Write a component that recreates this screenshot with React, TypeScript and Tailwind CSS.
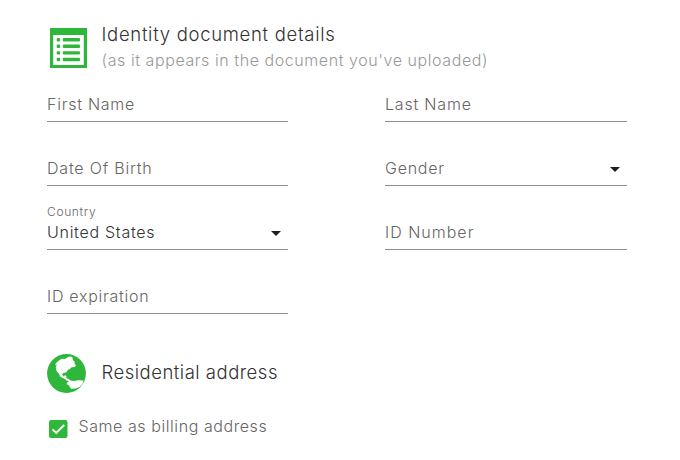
import type { ReactNode } from "react";

function Caret() {
  return (
    <svg width="10" height="5" viewBox="0 0 10 5" className="mr-[7px] mb-[13px] shrink-0">
      <path d="M0 0h10L5 5z" fill="#1f1f1f" />
    </svg>
  );
}

interface FieldProps {
  children: string;
  tracking: string;
  label?: string;
  select?: boolean;
}

function Field({ children, tracking, label, select }: FieldProps) {
  return (
    <div className="flex h-16 flex-col justify-end border-b border-[#8c8c8c]">
      {label && <span className="h-[15px] text-[12px] leading-4 font-light tracking-[0.65px] text-[#666]">{label}</span>}
      <div className="flex items-end justify-between">
        <span
          className={`h-[30px] text-[16px] leading-[26px] whitespace-nowrap ${label ? "text-[#333]" : "text-[#666]"} ${tracking}`}
        >
          {children}
        </span>
        {select && <Caret />}
      </div>
    </div>
  );
}

function ListIcon() {
  return (
    <svg width="37" height="40" viewBox="0 0 37 40" className="block">
      <path fill="#2fb73b" d="M0 0h37v40H0z" />
      <path fill="#fff" d="M3.200 7h30.600v30H3.200z" />
      <g fill="#2fb73b">
        <rect x="6.700" y="10" width="3.400" height="3.400" rx="1" />
        <rect x="6.700" y="16.600" width="3.400" height="3.400" rx="1" />
        <rect x="6.700" y="23.200" width="3.400" height="3.400" rx="1" />
        <rect x="6.700" y="29.800" width="3.400" height="3.400" rx="1" />
        <rect x="12.800" y="10" width="17.200" height="3.400" rx="1" />
        <rect x="12.800" y="16.600" width="17.200" height="3.400" rx="1" />
        <rect x="12.800" y="23.200" width="17.200" height="3.400" rx="1" />
        <rect x="12.800" y="29.800" width="17.200" height="3.400" rx="1" />
      </g>
    </svg>
  );
}

function GlobeIcon() {
  return (
    <svg width="39" height="39" viewBox="0 0 39 39" className="block">
      <circle cx="19.500" cy="19.500" r="19.400" fill="#2fb73b" />
      <path
        fill="#fff"
        d="M9 9l3-2.500 2.500-1.800 3.500.3 3-2 3-.5 1.500 1 .3 2.500 1.700 1.500.3 2.500 1.200 1.500-1.500 1.500-3 .3-1.500 1.700-2 .8-1.500 2.500-3 .7-1.500 1.500 1.500 1.800 1.700-1 1.300.7-.3 2 2.300 1 2 1.500-.5 1-3-.7-2.500-2-4-1.800-1.500-3-2.500-3-.8-4 1.300-2.500-2 .5z"
      />
      <path fill="#fff" d="M20.500 28.200l2.500-1.700 4 .5 4-.8 5.500.3-1 3.500-3 3-3.500 1.500-5 .3-2-3.300-2.500-1.500z" />
    </svg>
  );
}

function Heading({ icon, children }: { icon: ReactNode; children: ReactNode }) {
  return (
    <div className="flex">
      <div className="w-[54.5px] shrink-0">{icon}</div>
      <div className="whitespace-nowrap">{children}</div>
    </div>
  );
}

export default function App() {
  return (
    <main className="h-[460px] w-[680px] overflow-hidden bg-white pt-[22px] pl-[47px] font-['Inter',sans-serif] font-light">
      <Heading icon={<div className="pt-[6px] pl-[3px]"><ListIcon /></div>}>
        <h2 className="h-[26px] text-[18.5px] leading-[25px] tracking-[0.7px] text-[#333]">Identity document details</h2>
        <p className="h-6 text-[16px] leading-6 tracking-[0.57px] text-[#999]">(as it appears in the document you've uploaded)</p>
      </Heading>

      <div className="-mt-[14px] grid w-[580px] grid-cols-[241px_242px] gap-x-[97px]">
        <Field tracking="tracking-[0.75px]">First Name</Field>
        <Field tracking="tracking-[0.8px]">Last Name</Field>
        <Field tracking="tracking-[0.8px]">Date Of Birth</Field>
        <Field tracking="tracking-[0.75px]" select>Gender</Field>
        <Field tracking="tracking-[0.72px]" label="Country" select>United States</Field>
        <Field tracking="tracking-[1px]">ID Number</Field>
        <Field tracking="tracking-[0.72px]">ID expiration</Field>
      </div>

      <div className="mt-10">
        <Heading icon={<GlobeIcon />}>
          <h2 className="text-[18.5px] leading-[37px] tracking-[0.5px] text-[#333]">Residential address</h2>
        </Heading>
      </div>

      <label className="mt-[21px] flex items-start">
        <svg width="19" height="18" viewBox="0 0 19 18" className="mt-[6px] ml-[2px] shrink-0">
          <rect width="18.500" height="18" rx="2" fill="#2fb73b" />
          <path d="M3.500 9.300l3.700 3.700 8-8" fill="none" stroke="#fff" strokeWidth="1.900" />
        </svg>
        <span className="ml-[10.5px] text-[16px] leading-6 tracking-[0.57px] whitespace-nowrap text-[#666]">Same as billing address</span>
      </label>
    </main>
  );
}
